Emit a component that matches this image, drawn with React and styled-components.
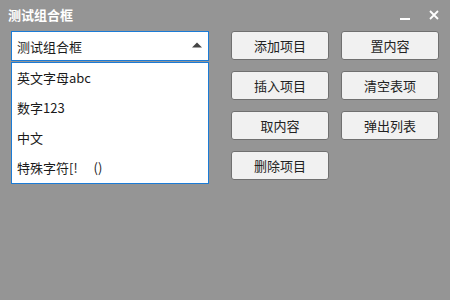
import React from 'react';
import styled, { createGlobalStyle } from 'styled-components';

const GlobalStyle = createGlobalStyle`
  html, body {
    margin: 0;
    padding: 0;
    background: #959595;
  }
  body {
    font-family: "Noto Sans CJK SC", "Noto Sans", sans-serif;
  }
`;

const items = ['英文字母abc', '数字123', '中文', '特殊字符[!\u3000\u00a0()'];
const buttons = ['添加项目', '置内容', '插入项目', '清空表项', '取内容', '弹出列表', '删除项目'];

export default function App() {
  return (
    <>
      <GlobalStyle />
      <Window>
        <TitleBar>
          <Title>测试组合框</Title>
          <WinButtons>
            <WinButton aria-label="minimize">
              <svg width="12" height="12" viewBox="0 0 12 12">
                <rect x="1" y="9" width="10" height="2" fill="#fff" />
              </svg>
            </WinButton>
            <WinButton aria-label="close">
              <svg width="12" height="12" viewBox="0 0 12 12">
                <path d="M2 2 L10 10 M10 2 L2 10" stroke="#fff" strokeWidth="1.8" />
              </svg>
            </WinButton>
          </WinButtons>
        </TitleBar>
        <Content>
          <ComboColumn>
            <Combo>
              <span>测试组合框</span>
              <svg width="10" height="6" viewBox="0 0 10 6">
                <polygon points="0,5.5 10,5.5 5,0.5" fill="#444" />
              </svg>
            </Combo>
            <List>
              {items.map((t) => (
                <Item key={t}>{t}</Item>
              ))}
            </List>
          </ComboColumn>
          <ButtonGrid>
            {buttons.map((b) => (
              <Button key={b}>{b}</Button>
            ))}
          </ButtonGrid>
        </Content>
      </Window>
    </>
  );
}

const Window = styled.div`
  width: 450px;
  height: 300px;
  background: #959595;
  overflow: hidden;
`;

const TitleBar = styled.div`
  height: 31px;
  display: flex;
  align-items: flex-start;
  justify-content: space-between;
`;

const Title = styled.div`
  color: #fff;
  font-size: 13px;
  font-weight: bold;
  line-height: 17px;
  padding: 6px 0 0 8px;
`;

const WinButtons = styled.div`
  display: flex;
  gap: 17px;
  padding: 9px 10px 0 0;
`;

const WinButton = styled.div`
  width: 12px;
  height: 12px;
  display: flex;
  svg { display: block; }
`;

const Content = styled.div`
  display: flex;
  gap: 22px;
  padding-left: 11px;
`;

const ComboColumn = styled.div`
  width: 198px;
  display: flex;
  flex-direction: column;
  gap: 1px;
`;

const Combo = styled.div`
  box-sizing: border-box;
  height: 30px;
  border: 1px solid #1b7bd6;
  background: #fff;
  display: flex;
  align-items: center;
  justify-content: space-between;
  padding: 0 6px 0 5px;
  font-size: 13px;
  color: #1a1a1a;
  svg { display: block; margin-top: -2px; }
`;

const List = styled.div`
  box-sizing: border-box;
  height: 122px;
  border: 1px solid #1b7bd6;
  background: #fff;
`;

const Item = styled.div`
  height: 30px;
  line-height: 30px;
  padding-left: 5px;
  font-size: 13px;
  color: #1a1a1a;
  white-space: pre;
`;

const ButtonGrid = styled.div`
  display: grid;
  grid-template-columns: 98px 98px;
  grid-auto-rows: 29px;
  column-gap: 12px;
  row-gap: 11px;
  align-content: start;
`;

const Button = styled.div`
  box-sizing: border-box;
  border: 1px solid #707070;
  border-radius: 3px;
  background: #f1f1f1;
  display: flex;
  align-items: center;
  justify-content: center;
  font-size: 13px;
  color: #222;
`;
